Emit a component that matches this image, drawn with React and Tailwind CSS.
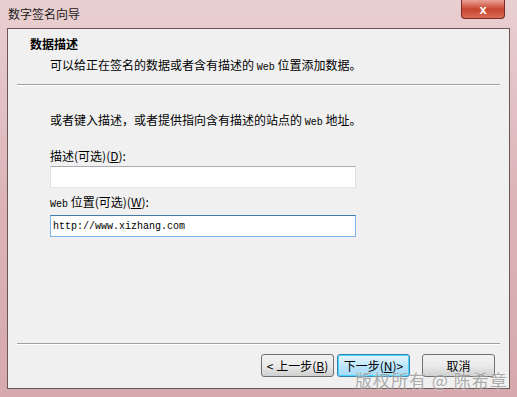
import React from 'react';

const cjk = { fontFamily: '"Noto Sans CJK SC", "Liberation Sans", sans-serif' };

const Lat = ({ children }) => (
  <span className="font-['Liberation_Mono',monospace] text-[10px]">{children}</span>
);

const Key = ({ k }) => (
  <span>
    (<span className="underline">{k}</span>)
  </span>
);

const App = () => {
  return (
    <div
      className="relative w-[517px] h-[397px] overflow-hidden bg-gradient-to-b from-[#e9cfd1] via-[#dcb4b8] to-[#d6a9ae] flex flex-col text-[12px] text-black"
      style={cjk}
    >
      {/* title bar */}
      <div className="h-[28px] flex items-start justify-between pl-[8px] pr-[12px] shrink-0">
        <span className="mt-[6px] leading-[16px] text-[12px] text-[#1a1a1a]">数字签名向导</span>
        <div className="w-[44px] h-[19px] rounded-b-[4px] border border-t-0 border-[#7a2a24] bg-gradient-to-b from-[#e8a196] via-[#c8442f] to-[#d86a55] flex items-center justify-center">
          <span className="text-white font-bold text-[13px] leading-none font-['Liberation_Sans',sans-serif]">x</span>
        </div>
      </div>

      {/* client area */}
      <div className="flex-1 mx-[7px] mb-[8px] border border-[#6b5656] bg-[#f0f0f0] flex flex-col">
        {/* header */}
        <div className="h-[55px] pl-[22px] pt-[7px] shrink-0">
          <div className="font-bold leading-[16px]">数据描述</div>
          <div className="pl-[20px] mt-[5px] leading-[16px]">
            可以给正在签名的数据或者含有描述的 <Lat>Web</Lat> 位置添加数据。
          </div>
        </div>
        <div className="mx-[9px] h-[2px] border-t border-[#a0a0a0] border-b border-b-white shrink-0" />

        {/* body */}
        <div className="pl-[42px] pt-[26px] flex flex-col">
          <div className="leading-[16px]">
            或者键入描述，或者提供指向含有描述的站点的 <Lat>Web</Lat> 地址。
          </div>
          <div className="mt-[17px] leading-[16px]">
            描述(可选)<Key k="D" />:
          </div>
          <div className="mt-[2px] w-[306px] h-[22px] bg-white border border-[#abadb3] border-l-[#e2e3ea] border-r-[#dbdfe6] border-b-[#e3e9ef]" />
          <div className="mt-[6px] leading-[16px]">
            <Lat>Web</Lat> 位置(可选)<Key k="W" />:
          </div>
          <div className="mt-[2px] w-[306px] h-[22px] bg-white border border-[#7eb4ea] border-t-[#3d7bad] flex items-center pl-[2px]">
            <span className="font-['Liberation_Mono',monospace] text-[10px]">http://www.xizhang.com</span>
          </div>
        </div>

        <div className="flex-1" />
        <div className="mx-[9px] h-[2px] border-t border-[#a0a0a0] border-b border-b-white shrink-0" />

        {/* buttons */}
        <div className="h-[43px] flex items-start justify-end pr-[14px] pt-[9px] shrink-0">
          <button className="w-[73px] h-[23px] rounded-[3px] border border-[#707070] bg-gradient-to-b from-[#f2f2f2] via-[#ebebeb] to-[#cfcfcf] leading-none flex items-center justify-center">
            &lt; 上一步<Key k="B" />
          </button>
          <button className="ml-[3px] w-[73px] h-[23px] rounded-[3px] border border-[#3c7fb1] bg-gradient-to-b from-[#eaf6fd] via-[#bee6fd] to-[#a7d9f5] leading-none flex items-center justify-center shadow-[inset_0_0_0_1px_#48d8fb]">
            下一步<Key k="N" /> &gt;
          </button>
          <button className="ml-[12px] w-[73px] h-[23px] rounded-[3px] border border-[#707070] bg-gradient-to-b from-[#f2f2f2] via-[#ebebeb] to-[#cfcfcf] leading-none flex items-center justify-center">
            取消
          </button>
        </div>
      </div>

      {/* watermark */}
      <div className="absolute left-[355px] top-[370px] whitespace-nowrap text-[17px] leading-[20px] tracking-[1px] text-[#9a9a9a] opacity-80 [text-shadow:0_0_2px_#ffffff]">
        版权所有 @ 陈希章
      </div>
    </div>
  );
};

export default App;
